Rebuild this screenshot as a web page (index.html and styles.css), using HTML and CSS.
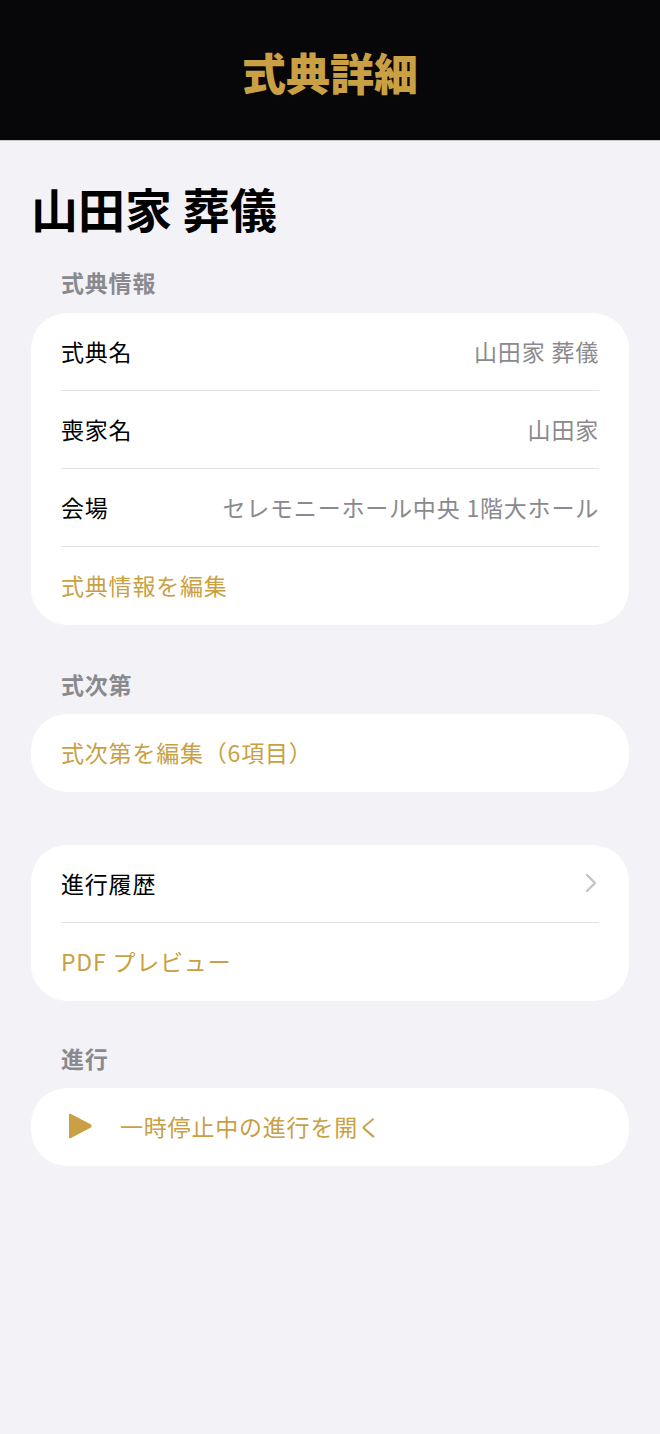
FILE: index.html
```html
<!DOCTYPE html>
<html lang="ja">
<head>
    <meta charset="UTF-8">
    <meta name="viewport" content="width=device-width, initial-scale=1.0">
    <title>式典詳細</title>
    <link rel="stylesheet" href="styles.css">
</head>
<body>
    <div class="header">
        <div class="header-title">式典詳細</div>
    </div>
    <div class="content">
        <h1 class="page-title">山田家 葬儀</h1>

        <div class="section-label">式典情報</div>
        <div class="card">
            <div class="row">
                <span class="row-label">式典名</span>
                <span class="row-value">山田家 葬儀</span>
            </div>
            <div class="row">
                <span class="row-label">喪家名</span>
                <span class="row-value">山田家</span>
            </div>
            <div class="row">
                <span class="row-label">会場</span>
                <span class="row-value">セレモニーホール中央 1階大ホール</span>
            </div>
            <div class="row link">式典情報を編集</div>
        </div>

        <div class="section-label">式次第</div>
        <div class="card">
            <div class="row link">式次第を編集（6項目）</div>
        </div>

        <div class="card card-spaced">
            <div class="row">
                <span class="row-label">進行履歴</span>
                <svg class="chevron" width="14" height="20" viewBox="0 0 14 20">
                    <polyline points="3,2 11,10 3,18" fill="none" stroke="#c4c4c7" stroke-width="2.4" stroke-linecap="round" stroke-linejoin="round"/>
                </svg>
            </div>
            <div class="row link">PDF プレビュー</div>
        </div>

        <div class="section-label">進行</div>
        <div class="card">
            <div class="row link play-row">
                <svg class="play-icon" width="26" height="28" viewBox="0 0 26 28">
                    <path d="M2 3 Q2 0.8 4 1.9 L24 12.6 Q25.6 14 24 15.4 L4 26.1 Q2 27.2 2 25 Z" fill="#c9a043"/>
                </svg>
                <span>一時停止中の進行を開く</span>
            </div>
        </div>
    </div>
</body>
</html>
```

FILE: styles.css
```css
body {
    margin: 0;
    background: #f2f2f7;
    font-family: "Noto Sans CJK JP", "Noto Sans", sans-serif;
    color: #000;
}
.header {
    height: 140px;
    background: #070709;
    border-bottom: 1px solid #c8c8cc;
    display: flex;
    align-items: center;
    justify-content: center;
}
.header-title {
    color: #c9a043;
    font-size: 44px;
    font-weight: 900;
    margin-top: 4px;
}
.content {
    padding: 0 31px 40px;
}
.page-title {
    margin: 39px 0 0;
    font-size: 47px;
    font-weight: 700;
    line-height: 56px;
}
.section-label {
    margin: 45px 0 16px 30px;
    font-size: 23px;
    font-weight: 700;
    line-height: 28px;
    letter-spacing: 0.8px;
    color: #8a8a8e;
}
.page-title + .section-label {
    margin-top: 32px;
    margin-bottom: 17px;
}
.card-spaced + .section-label {
    margin-top: 43px;
}
.card {
    background: #fff;
    border-radius: 36px;
    padding: 0 30px;
}
.card-spaced {
    margin-top: 53px;
}
.row {
    height: 75px;
    padding-bottom: 2px;
    display: flex;
    align-items: center;
    justify-content: space-between;
    font-size: 23px;
    letter-spacing: 0.8px;
    border-bottom: 1px solid #e2e2e6;
}
.row:last-child {
    border-bottom: none;
    height: 76px;
}
.row-value {
    color: #8a8a8e;
}
.link {
    color: #c9a043;
    justify-content: flex-start;
}
.chevron {
    margin-right: 1px;
}
.play-row {
    gap: 27px;
}
.play-icon {
    margin-left: 6px;
}
```
